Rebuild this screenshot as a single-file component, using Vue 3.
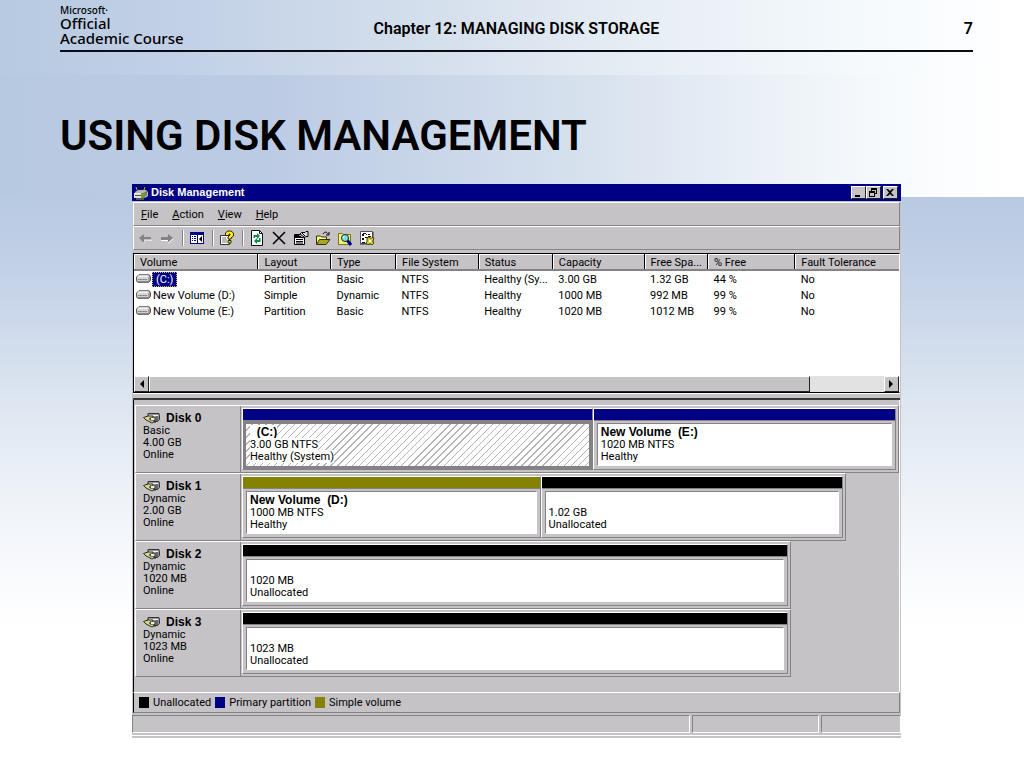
<template>
  <div class="slide">
    <header class="slide-header">
      <div class="brand">
        <span class="brand-small">Microsoft·</span>
        <span>Official</span>
        <span>Academic Course</span>
      </div>
      <p class="chapter">Chapter 12: MANAGING DISK STORAGE</p>
      <span class="page-number">7</span>
    </header>

    <h1>USING DISK MANAGEMENT</h1>

    <section class="window">
      <!-- title bar -->
      <div class="title-bar">
        <svg class="icon" viewBox="0 0 16 16" v-html="icons.app"></svg>
        <h2>Disk Management</h2>
        <div class="window-buttons">
          <button aria-label="Minimize">
            <svg viewBox="0 0 10 9"><path d="M2 7h5v2H2z" /></svg>
          </button>
          <button aria-label="Restore">
            <svg viewBox="0 0 10 9"><path d="M3 0h6v6H7V5h1V2H4v1H3zM1 3h6v6H1zM2 5v3h4V5z" fill-rule="evenodd" /></svg>
          </button>
          <button aria-label="Close" class="close">
            <svg viewBox="0 0 10 9"><path d="M1 1h2l2 2 2-2h2L6 4.500 9 8H7L5 6 3 8H1l3-3.500z" /></svg>
          </button>
        </div>
      </div>

      <nav class="menu-bar">
        <button v-for="item in menu" :key="item"><u>{{ item[0] }}</u>{{ item.slice(1) }}</button>
      </nav>

      <div class="toolbar">
        <div v-for="(group, index) in toolbar" :key="index" class="tool-group">
          <button v-for="tool in group" :key="tool.icon" :aria-label="tool.label">
            <svg class="icon" viewBox="0 0 16 16" v-html="icons[tool.icon]"></svg>
          </button>
        </div>
      </div>

      <!-- volume list -->
      <div class="volume-list">
        <table>
          <colgroup>
            <col v-for="column in columns" :key="column.title" :style="{ width: column.width }" />
          </colgroup>
          <thead>
            <tr>
              <th v-for="column in columns" :key="column.title">{{ column.title }}</th>
            </tr>
          </thead>
          <tbody>
            <tr v-for="(volume, index) in volumes" :key="volume[0]">
              <td v-for="(cell, i) in volume" :key="i">
                <div v-if="i === 0" class="volume-name">
                  <svg class="drive" viewBox="0 0 16 10" v-html="icons.drive"></svg>
                  <span :class="{ selected: index === 0 }">{{ cell }}</span>
                </div>
                <template v-else>{{ cell }}</template>
              </td>
            </tr>
          </tbody>
        </table>
        <div class="scrollbar">
          <button aria-label="Scroll left">
            <svg viewBox="0 0 8 8"><path d="M6 0v8L2 4z" /></svg>
          </button>
          <div class="track"><div class="thumb"></div></div>
          <button aria-label="Scroll right">
            <svg viewBox="0 0 8 8"><path d="M2 0v8l4-4z" /></svg>
          </button>
        </div>
      </div>
      <div class="splitter"></div>

      <!-- graphical view -->
      <div class="disks">
        <div v-for="disk in disks" :key="disk.name" class="disk" :style="{ width: disk.width }">
          <div class="disk-label">
            <h3>
              <svg class="disk-icon" viewBox="0 0 17 12" v-html="icons.disk"></svg>
              {{ disk.name }}
            </h3>
            <p>{{ disk.type }}</p>
            <p>{{ disk.size }}</p>
            <p>Online</p>
          </div>
          <div class="partitions">
            <div
              v-for="part in disk.parts"
              :key="part.name"
              :class="['partition', part.kind, { active: part.active }]"
              :style="{ flexGrow: part.share }"
            >
              <div class="stripe"></div>
              <div class="body">
                <p class="name"><span>{{ part.name }}</span></p>
                <p><span>{{ part.size }}</span></p>
                <p><span>{{ part.status }}</span></p>
              </div>
            </div>
          </div>
        </div>
      </div>

      <div class="legend">
        <span v-for="item in legend" :key="item.kind" :class="['legend-item', item.kind]">
          <i class="stripe"></i>{{ item.label }}
        </span>
      </div>

      <div class="status-bar">
        <span></span>
        <span></span>
        <span></span>
      </div>
    </section>
  </div>
</template>

<script setup>
const menu = ['File', 'Action', 'View', 'Help']

const toolbar = [
  [
    { icon: 'back', label: 'Back' },
    { icon: 'forward', label: 'Forward' }
  ],
  [{ icon: 'tree', label: 'Show/Hide Console Tree' }],
  [{ icon: 'help', label: 'Help' }],
  [
    { icon: 'refresh', label: 'Refresh' },
    { icon: 'remove', label: 'Delete' },
    { icon: 'properties', label: 'Properties' },
    { icon: 'open', label: 'Open' },
    { icon: 'explore', label: 'Explore' },
    { icon: 'settings', label: 'Settings' }
  ]
]

const columns = [
  { title: 'Volume', width: '16.2%' },
  { title: 'Layout', width: '9.5%' },
  { title: 'Type', width: '8.5%' },
  { title: 'File System', width: '10.8%' },
  { title: 'Status', width: '9.7%' },
  { title: 'Capacity', width: '12%' },
  { title: 'Free Spa...', width: '8.3%' },
  { title: '% Free', width: '11.4%' },
  { title: 'Fault Tolerance', width: '13.6%' }
]

const volumes = [
  ['(C:)', 'Partition', 'Basic', 'NTFS', 'Healthy (Sy...', '3.00 GB', '1.32 GB', '44 %', 'No'],
  ['New Volume (D:)', 'Simple', 'Dynamic', 'NTFS', 'Healthy', '1000 MB', '992 MB', '99 %', 'No'],
  ['New Volume (E:)', 'Partition', 'Basic', 'NTFS', 'Healthy', '1020 MB', '1012 MB', '99 %', 'No']
]

const disks = [
  {
    name: 'Disk 0',
    type: 'Basic',
    size: '4.00 GB',
    width: '100%',
    parts: [
      { name: '  (C:)', size: '3.00 GB NTFS', status: 'Healthy (System)', kind: 'primary', share: 351, active: true },
      { name: 'New Volume  (E:)', size: '1020 MB NTFS', status: 'Healthy', kind: 'primary', share: 303 }
    ]
  },
  {
    name: 'Disk 1',
    type: 'Dynamic',
    size: '2.00 GB',
    width: '93.1%',
    parts: [
      { name: 'New Volume  (D:)', size: '1000 MB NTFS', status: 'Healthy', kind: 'simple', share: 298 },
      { name: '', size: '1.02 GB', status: 'Unallocated', kind: 'unallocated', share: 302 }
    ]
  },
  {
    name: 'Disk 2',
    type: 'Dynamic',
    size: '1020 MB',
    width: '85.9%',
    parts: [{ name: '', size: '1020 MB', status: 'Unallocated', kind: 'unallocated', share: 1 }]
  },
  {
    name: 'Disk 3',
    type: 'Dynamic',
    size: '1023 MB',
    width: '85.9%',
    parts: [{ name: '', size: '1023 MB', status: 'Unallocated', kind: 'unallocated', share: 1 }]
  }
]

const legend = [
  { kind: 'unallocated', label: 'Unallocated' },
  { kind: 'primary', label: 'Primary partition' },
  { kind: 'simple', label: 'Simple volume' }
]

// 16px icon artwork
const icons = {
  app: `<path d="M2 7l3-2h8l2 2v4l-3 2H2z" fill="#b8b8b0"/><path d="M1 8h9v5H1z" fill="#e4e4dc"/>
    <path d="M2 10h6v1H2zM3 13h8v2H3z" fill="#55554c"/><path d="M10 8l4-2v4l-4 3z" fill="#77776a"/>
    <path d="M8 8h4v5H8z" fill="#6f9d35"/><path d="M2 1l1 3M6 2v3M11 1l-1 3M14 2l-2 3" stroke="#111" fill="none"/>
    <path d="M3 2l1 3M12 2l-1 3" stroke="#a9a978" fill="none"/>`,
  back: `<path d="M2 8l5-4v3h7v3H7v3z" fill="#858285"/><path d="M7 12v1M7 10h7v1" stroke="#fff" fill="none"/>`,
  forward: `<path d="M14 8L9 4v3H2v3h7v3z" fill="#858285"/><path d="M2 10.500h7M9 13l5-4" stroke="#fff" fill="none"/>`,
  tree: `<path d="M1 2h14v12H1z" fill="#000084"/><path d="M2 5h6v8H2zM9 5h5v8H9z" fill="#fff"/>
    <path d="M3 6h1v1H3zM5 6h2v1H5zM3 8h1v1H3zM5 8h2v1H5zM3 10h1v1H3zM5 10h2v1H5z" fill="#000084"/>
    <path d="M13 6v6l-3-3z" fill="#000"/>`,
  help: `<path d="M1.500 5.500h9v9h-9z" fill="#fff" stroke="#333"/><path d="M3 8h4M3 10h5M3 12h5" stroke="#777"/>
    <path d="M6.500 5.500V3L8.500 1H12l2.500 2v3L12 8v1H9V7l2-2V4h-1v1.500z" fill="#ffec19" stroke="#2a2a00"/>
    <path d="M9 10.500h3v2.500H9z" fill="#ffec19" stroke="#2a2a00"/>`,
  refresh: `<path d="M2.500.500h8l3 3v12h-11z" fill="#fff" stroke="#111"/><path d="M10.500.500v3h3" fill="none" stroke="#111"/>
    <path d="M4.500 8V5H8V3l3 3-3 3V7H6v1zM11.500 8v4H8v2l-3-3 3-3v2h2V8z" fill="#079044"/>`,
  remove: `<path d="M2 2l12 12M14 2L2 14" stroke="#000" stroke-width="1.500" fill="none"/>`,
  properties: `<path d="M1.500 4.500h10v10h-10z" fill="#fff" stroke="#000"/><path d="M2 5h9v3H2z"/>
    <path d="M3 9.500h7M3 11.500h7M3 13h7" stroke="#000"/><path d="M5.500 5.500l3-3H12l1-1h2v5h-2L10 8z" fill="#ddd" stroke="#000"/>
    <path d="M7 4l4 3M9 3l3 3" stroke="#000"/>`,
  open: `<path d="M1.500 14V6h4l1 1h5v3" fill="#ffff80" stroke="#333300"/><path d="M1.500 14.500l3-5h10.500l-4 5z" fill="#a9a627" stroke="#333300"/>
    <path d="M8 4c2-3 4-2 5 0M14 2v3h-3" fill="none" stroke="#000"/>`,
  explore: `<path d="M1.500 3.500h4l1 1h7v10h-12z" fill="#f7f36b" stroke="#77761f"/><path d="M10 10l4 5" stroke="#000084" stroke-width="3"/>
    <circle cx="8" cy="8" r="3.500" fill="#70e5ec" stroke="#222"/><path d="M7 6l-1 2" stroke="#fff"/>`,
  settings: `<path d="M1.500 1.500h12v12h-12z" fill="#fff" stroke="#555"/><path d="M1 14h13M14 2v12" stroke="#333"/>
    <path d="M3 4h2v2H3zM7 4h1v1H7zM9 4h2v1H9zM3 8h2v2H3zM6 7h3v1H6zM3 12h3v1H3zM4 3h3v1H4zM9 6h3v1H9z" fill="#111"/>
    <path d="M8 8l2-1 1 1h2l1-1 1 2-1 1v2l1 1-2 2-1-1h-2l-1 1-2-2 1-1v-2z" fill="#d6ca31" stroke="#4e4a05"/><path d="M10 10h2v2h-2z" fill="#fff"/>`,
  drive: `<path d="M3 .500h11l1.500 2v4l-2 2H2L.500 7V3z" fill="#9a9a9a" stroke="#4c4c4c"/>
    <path d="M1 3l2-2h10l1 2z" fill="#f2f2f2"/><path d="M1 3h12v4H1z" fill="#d6d6d6"/><path d="M2 5h10v1H2z" fill="#888"/>`,
  disk: `<path d="M5 1.500h11l.500 2v4l-2 2H9L5 6z" fill="#999" stroke="#333"/><path d="M6 3.500h9" stroke="#eee"/><path d="M14 4v5" stroke="#333"/>
    <path d="M.500 5.500L5 4h5v2H7v2h4v2L9 11 3 8z" fill="#d5d58a" stroke="#2c2c22"/><path d="M8 6h4v2H8z" fill="#eee"/><path d="M12 5v6" stroke="#222"/>`
}
</script>

<style>
body {
  margin: 0;
}
</style>

<style scoped>
.slide {
  box-sizing: border-box;
  min-height: 100vh;
  padding: 0 5% 28px 60px;
  color: #000;
  background:
    linear-gradient(90deg, #b7cae0 0%, #c0cfe6 15%, #d3deec 40%, #e6edf4 62%, #f4f9fc 83%, #fff 99%) 0 0 / 100% 75px no-repeat,
    linear-gradient(90deg, #b7c9e0 0%, #bccbe4 26%, #c9d6e9 42%, #d8e2ee 58%, #ebf1f7 75%, #f8fbfd 88%, #fff 99%) 0 75px / 100% 122px no-repeat,
    linear-gradient(180deg, #b8c9e2 0, #c6d3e8 90px, #dce5f0 200px, #f0f4f9 310px, #fff 430px) 0 197px / 100% 100% no-repeat;
}

h1,
h2,
h3,
p {
  margin: 0;
}

button {
  padding: 0;
  border: 0;
  background: none;
  color: inherit;
  font: inherit;
}

svg {
  display: block;
}

/* slide heading */
.slide-header {
  display: grid;
  grid-template-columns: 1fr auto 1fr;
  align-items: end;
  box-sizing: border-box;
  height: 52px;
  border-bottom: 2px solid #0b0d14;
  font: 600 16px/20px Roboto, sans-serif;
}

.brand {
  display: flex;
  flex-direction: column;
  padding-bottom: 4px;
  font: 500 15px/15px "Noto Sans", sans-serif;
}

.brand-small {
  font-size: 10px;
  line-height: 12px;
}

.chapter,
.page-number {
  padding-bottom: 11px;
}

.page-number {
  text-align: right;
}

h1 {
  padding: 58px 0 22px;
  font: 600 42px/52px Roboto, sans-serif;
}

/* window frame */
.window {
  margin: 0 72px;
  background: #c6c3c6;
  font: 11px/13px Roboto, Arial, sans-serif;
  border-bottom: 2px solid #c6c3c6;
}

.icon {
  width: 16px;
  height: 16px;
}

.title-bar {
  display: flex;
  align-items: center;
  gap: 2px;
  height: 17px;
  padding: 0 3px 0 1px;
  background: #000084;
  color: #fff;
}

.title-bar h2 {
  flex: 1;
  font: bold 11px/13px "Liberation Sans", Arial, sans-serif;
}

.window-buttons {
  display: flex;
}

.window-buttons button {
  display: flex;
  align-items: center;
  justify-content: center;
  box-sizing: border-box;
  width: 15px;
  height: 13px;
  border: 1px solid;
  border-color: #fff #222 #222 #fff;
  background: #c6c3c6;
  color: #000;
}

.window-buttons .close {
  margin-left: 2px;
}

.window-buttons svg {
  width: 10px;
  height: 9px;
}

.menu-bar,
.toolbar {
  display: flex;
  align-items: center;
  box-sizing: border-box;
  height: 24px;
  margin: 0 1px;
  border: 1px solid;
  border-color: #fff #848284 #848284 #fff;
}

.menu-bar {
  gap: 14px;
  margin-top: 1px;
  padding: 1px 0 0 7px;
}

.toolbar {
  padding-left: 3px;
}

.tool-group {
  display: flex;
  gap: 6px;
  padding: 0 7px 0 6px;
  border-left: 1px solid #848284;
  box-shadow: inset 1px 0 #fff;
}

.tool-group:first-child {
  padding-left: 0;
  border: 0;
  box-shadow: none;
}

/* volume list */
.volume-list {
  margin: 3px 1px 0;
  border: 1px solid #000;
  border-right-color: #fff;
  background: #fff;
}

table {
  width: 100%;
  margin-bottom: 57px;
  border-collapse: collapse;
  table-layout: fixed;
}

th,
td {
  padding: 0 0 0 6px;
  overflow: hidden;
  font-weight: normal;
  text-align: left;
  white-space: nowrap;
}

th {
  height: 14px;
  padding-top: 1px;
  background: #c6c3c6;
  border-right: 1px solid #000;
  border-bottom: 2px solid #848284;
  box-shadow: inset 1px 1px #fff;
}

th:last-child {
  border-right: 0;
}

td {
  height: 16px;
}

td:first-child {
  padding-left: 2px;
}

.volume-name {
  display: flex;
  align-items: center;
  gap: 1px;
}

.drive {
  width: 15px;
  height: 10px;
}

.volume-name span {
  padding: 1px;
}

.volume-name .selected {
  padding: 1px 4px;
  outline: 1px dotted #c8b060;
  outline-offset: -1px;
  background: #000084;
  color: #fff;
}

.scrollbar {
  display: flex;
  height: 16px;
  background: #e2e2e2;
}

.scrollbar button,
.thumb {
  box-sizing: border-box;
  border: 1px solid;
  border-color: #fff #222 #222 #fff;
  background: #c6c3c6;
}

.scrollbar button {
  display: flex;
  align-items: center;
  justify-content: center;
  width: 15px;
}

.scrollbar svg {
  width: 8px;
  height: 8px;
}

.track {
  flex: 1;
}

.thumb {
  width: 90%;
  height: 100%;
}

.splitter {
  height: 4px;
  margin: 0 1px;
  border-top: 1px solid #fff;
  border-bottom: 2px solid #393939;
}

/* graphical view */
.disks {
  min-height: 292px;
  margin: 0 1px;
  padding: 5px 0 0 1px;
  box-sizing: border-box;
  border-left: 1px solid #000;
  border-right: 1px solid #fff;
}

.disk {
  display: flex;
  box-sizing: border-box;
  min-height: 68px;
  border: 1px solid;
  border-color: #fff #848284 #848284 #fff;
}

.disk-label {
  flex: 0 0 105px;
  box-sizing: border-box;
  padding: 6px 0 0 7px;
  border-right: 1px solid #848284;
}

.disk-label p,
.body p {
  height: 12px;
  line-height: 12px;
}

h3 {
  display: flex;
  gap: 6px;
  font: bold 12px/13px "Liberation Sans", Arial, sans-serif;
}

.disk-icon {
  width: 17px;
  height: 12px;
}

.partitions {
  display: flex;
  flex: 1;
  margin: 2px 2px 2px 1px;
}

.partition {
  display: flex;
  flex-direction: column;
  flex-basis: 0;
  border: 1px solid;
  border-color: #fff #848284 #848284 #fff;
}

.partition .stripe {
  height: 11px;
  border-bottom: 1px solid #848284;
}

.unallocated .stripe {
  background: #000;
}

.primary .stripe {
  background: #000084;
}

.simple .stripe {
  background: #848200;
}

.body {
  flex: 1;
  margin: 2px 3px 3px;
  padding: 2px 0 0 3px;
  border: 1px solid;
  border-color: #848284 #fff #fff #848284;
  background: #fff;
  white-space: pre;
}

.body .name {
  height: 13px;
  font: bold 12px/13px "Liberation Sans", Arial, sans-serif;
}

/* the focused partition gets a heavy frame and a hatched body */
.active .body {
  margin: 0;
  padding: 2px 0 0 4px;
  border: 3px solid #848284;
  background: repeating-linear-gradient(135deg, #fff 0 4px, #b4b4b4 4px 5px);
}

.active .body span {
  background: #fff;
}

.legend {
  display: flex;
  align-items: center;
  gap: 4px;
  box-sizing: border-box;
  height: 21px;
  margin: 0 1px;
  padding-left: 5px;
  border: 1px solid;
  border-color: #fff #848284 #848284 #000;
}

.legend-item {
  display: flex;
  align-items: center;
  gap: 4px;
}

.legend-item .stripe {
  width: 10px;
  height: 11px;
}

.status-bar {
  display: grid;
  grid-template-columns: 557fr 126fr 80fr;
  gap: 2px;
  padding: 2px 0;
  border-bottom: 1px solid #fff;
}

.status-bar span {
  height: 16px;
  border: 1px solid;
  border-color: #848284 #fff #fff #848284;
}
</style>
